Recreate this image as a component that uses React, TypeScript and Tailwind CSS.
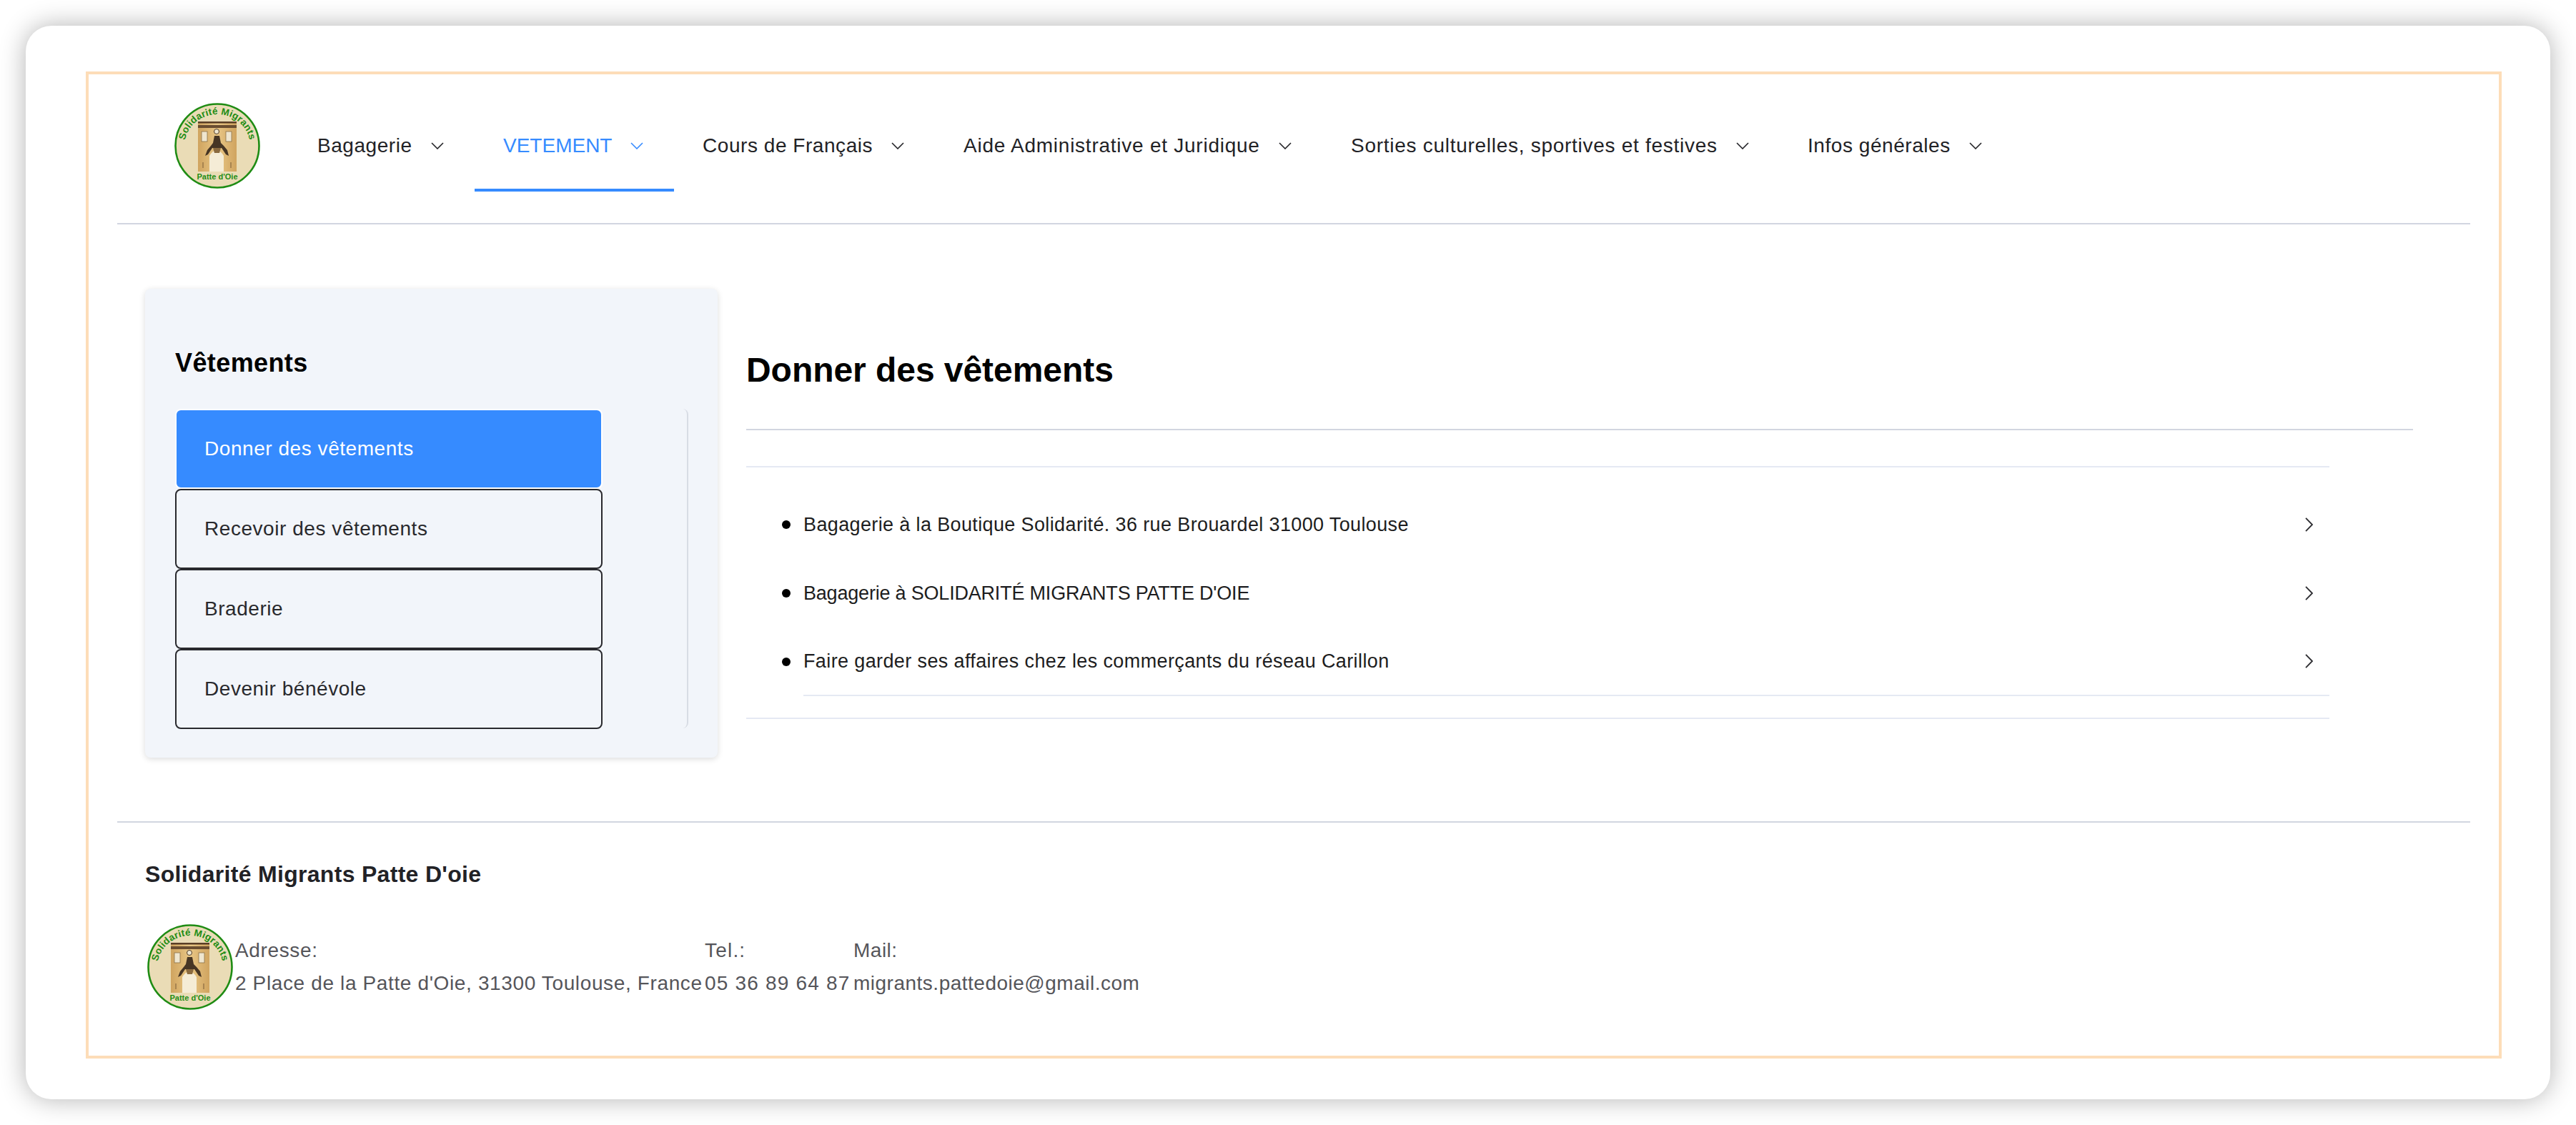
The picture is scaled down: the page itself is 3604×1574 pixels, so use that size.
const navItems = [
  { label: "Bagagerie", width: "w-[260px]", tracking: "tracking-[0.55px]" },
  { label: "VETEMENT", width: "w-[279px]", tracking: "tracking-[0px]", active: true },
  { label: "Cours de Français", width: "w-[365px]", tracking: "tracking-[0.55px]" },
  { label: "Aide Administrative et Juridique", width: "w-[542px]", tracking: "tracking-[0.75px]" },
  { label: "Sorties culturelles, sportives et festives", width: "w-[639px]", tracking: "tracking-[0.72px]" },
  { label: "Infos générales", width: "w-[300px]", tracking: "tracking-[0.55px]" },
];

const sideItems = ["Donner des vêtements", "Recevoir des vêtements", "Braderie", "Devenir bénévole"];

const rows = [
  { label: "Bagagerie à la Boutique Solidarité. 36 rue Brouardel 31000 Toulouse", tracking: "tracking-[0.37px]" },
  { label: "Bagagerie à SOLIDARITÉ MIGRANTS PATTE D'OIE", tracking: "tracking-[-0.2px]" },
  { label: "Faire garder ses affaires chez les commerçants du réseau Carillon", tracking: "tracking-[0.38px]" },
];

function Logo({ id, className }: { id: string; className: string }) {
  return (
    <svg viewBox="0 0 120 120" className={className}>
      <defs>
        <path id={id} d="M14 60 A46 44 0 0 1 106 60" />
        <linearGradient id={`${id}-wall`} x1="0" x2="1" y1="0" y2="0">
          <stop offset="0" stopColor="#d0a45f" />
          <stop offset="0.5" stopColor="#e8c685" />
          <stop offset="1" stopColor="#d0a45f" />
        </linearGradient>
      </defs>
      <circle cx="60" cy="60" r="58.5" fill="#eadcb6" stroke="#1f8c14" strokeWidth="2.6" />
      <text fontFamily="Liberation Sans" fontWeight="700" fontSize="13.5" fill="#1f8c14" letterSpacing="0.2">
        <textPath href={`#${id}`} startOffset="50%" textAnchor="middle">
          Solidarité Migrants
        </textPath>
      </text>
      <rect x="33" y="27" width="54" height="69" fill={`url(#${id}-wall)`} />
      <rect x="33" y="26" width="54" height="2.5" fill="#5a3e26" />
      <rect x="33" y="31" width="54" height="4" fill="#6a4d30" />
      <circle cx="59" cy="40" r="3.5" fill="#efe6cf" stroke="#4f3a24" strokeWidth="1" />
      <rect x="38" y="40" width="8" height="14" fill="#efe6cf" stroke="#8a7048" strokeWidth="0.8" />
      <rect x="72" y="40" width="8" height="14" fill="#efe6cf" stroke="#8a7048" strokeWidth="0.8" />
      <rect x="39" y="83" width="2" height="8" fill="#a88450" />
      <rect x="78" y="83" width="2" height="8" fill="#a88450" />
      <path d="M49 96 V74 Q59 58 69 74 V96 Z" fill="#f5ecd6" />
      <path d="M43 74 L46 66 L51 60 L54 56 L56 46 H63 L65 56 L69 60 L74 66 L76 74 L72 72 L66 63 H53 L47 72 Z" fill="#463524" />
      <path d="M54 63 H65 L63 70 H56 Z" fill="#8a6a3f" />
      <text x="60" y="107" textAnchor="middle" fontFamily="Liberation Sans" fontWeight="700" fontSize="11" fill="#1f8c14">
        Patte d'Oie
      </text>
    </svg>
  );
}

function ChevronDown({ className }: { className: string }) {
  return (
    <svg viewBox="0 0 18 10" fill="none" stroke="currentColor" strokeWidth="1.6" className={className}>
      <path d="M1 1 L9 9 L17 1" />
    </svg>
  );
}

function ChevronRight() {
  return (
    <svg viewBox="0 0 11 20" fill="none" stroke="#2c2c30" strokeWidth="1.8" className="h-[20px] w-[11px] shrink-0">
      <path d="M1 0.8 L10 10 L1 19.2" />
    </svg>
  );
}

export default function App() {
  return (
    <div className="h-[1574px] w-[3604px] overflow-hidden bg-white pt-[36px] pl-[36px] font-['Liberation_Sans',sans-serif]">
      <div className="h-[1502px] w-[3532px] rounded-[36px] bg-white pt-[64px] pl-[84px] shadow-[0_0_36px_rgba(0,0,0,0.3)]">
        <div className="h-[1381px] w-[3380px] border-4 border-[#fdddb8]">
          <header className="mx-[40px] flex h-[210px] w-[3292px] border-b-2 border-[#d2d6e0] pl-[80px]">
            <Logo id="logo-top" className="mt-[40px] h-[120px] w-[120px]" />
            <nav className="mt-[36px] ml-[40px] flex h-[128px]">
              {navItems.map((item) => (
                <a
                  key={item.label}
                  className={[
                    "flex items-center gap-[26px] border-b-4 pt-[4px] pl-[40px] text-[28px]",
                    item.width,
                    item.tracking,
                    item.active ? "border-[#368bff] text-[#368bff]" : "border-transparent text-[#222226]",
                  ].join(" ")}
                >
                  <span className="whitespace-nowrap">{item.label}</span>
                  <ChevronDown className="h-[10px] w-[18px] shrink-0" />
                </a>
              ))}
            </nav>
          </header>

          <main className="mx-[40px] flex h-[835px] w-[3292px] pt-[90px] pl-[39px]">
            <aside className="h-[656px] w-[801px] rounded-[8px] bg-[#f2f5fa] pt-[86px] pl-[42px] shadow-[0_2px_8px_rgba(0,0,0,0.14)]">
              <h2 className="text-[36px] leading-[36px] font-bold tracking-[0.4px] text-black">Vêtements</h2>
              <div className="mt-[46px] h-[447px] w-[718px] rounded-r-[8px] border-r-2 border-[#d8dce4]">
                {sideItems.map((label, index) => (
                  <div
                    key={label}
                    className={[
                      "mb-[0.5px] flex h-[111.5px] w-[598px] items-center rounded-[8px] border-2 pl-[39px] text-[28px] tracking-[0.55px]",
                      index === 0 ? "border-white bg-[#368bff] text-white" : "border-[#29292d] text-[#29292d]",
                    ].join(" ")}
                  >
                    {label}
                  </div>
                ))}
              </div>
            </aside>

            <section className="ml-[40px] w-[2332px]">
              <h1 className="mt-[90px] text-[48px] leading-[48px] font-bold tracking-[-0.05px] text-black">Donner des vêtements</h1>
              <div className="mt-[58px] h-[2px] bg-[#d2d6e0]" />
              <div className="mt-[50px] w-[2215px] border-y-2 border-[#e5e9f3] pt-[32px] pb-[30px]">
                {rows.map((row, index) => (
                  <div key={row.label} className="flex h-[96px] items-center pl-[50px]">
                    <span className="h-[12px] w-[12px] shrink-0 rounded-full bg-black" />
                    <div
                      className={[
                        "ml-[18px] flex h-full flex-1 items-center justify-between pr-[23px]",
                        index === 2 ? "border-b-2 border-[#e5e9f3]" : "",
                      ].join(" ")}
                    >
                      <span className={`text-[27px] text-[#1d1d20] ${row.tracking}`}>{row.label}</span>
                      <ChevronRight />
                    </div>
                  </div>
                ))}
              </div>
            </section>
          </main>

          <footer className="mx-[40px] h-[328px] w-[3292px] border-t-2 border-[#d2d6e0] pt-[54px] pl-[39px]">
            <h3 className="text-[32px] leading-[36px] font-bold tracking-[0.3px] text-[#222226]">Solidarité Migrants Patte D'oie</h3>
            <div className="mt-[52px] flex h-[120px] items-center pl-[3px] text-[28px] leading-[46px] text-[#55555a]">
              <Logo id="logo-bottom" className="h-[120px] w-[120px] shrink-0" />
              <div className="ml-[3px] w-[657px] whitespace-nowrap tracking-[0.63px]">
                <p>Adresse:</p>
                <p>2 Place de la Patte d'Oie, 31300 Toulouse, France</p>
              </div>
              <div className="w-[208px] whitespace-nowrap tracking-[1.2px]">
                <p>Tel.:</p>
                <p>05 36 89 64 87</p>
              </div>
              <div className="whitespace-nowrap tracking-[0.5px]">
                <p>Mail:</p>
                <p>migrants.pattedoie@gmail.com</p>
              </div>
            </div>
          </footer>
        </div>
      </div>
    </div>
  );
}
